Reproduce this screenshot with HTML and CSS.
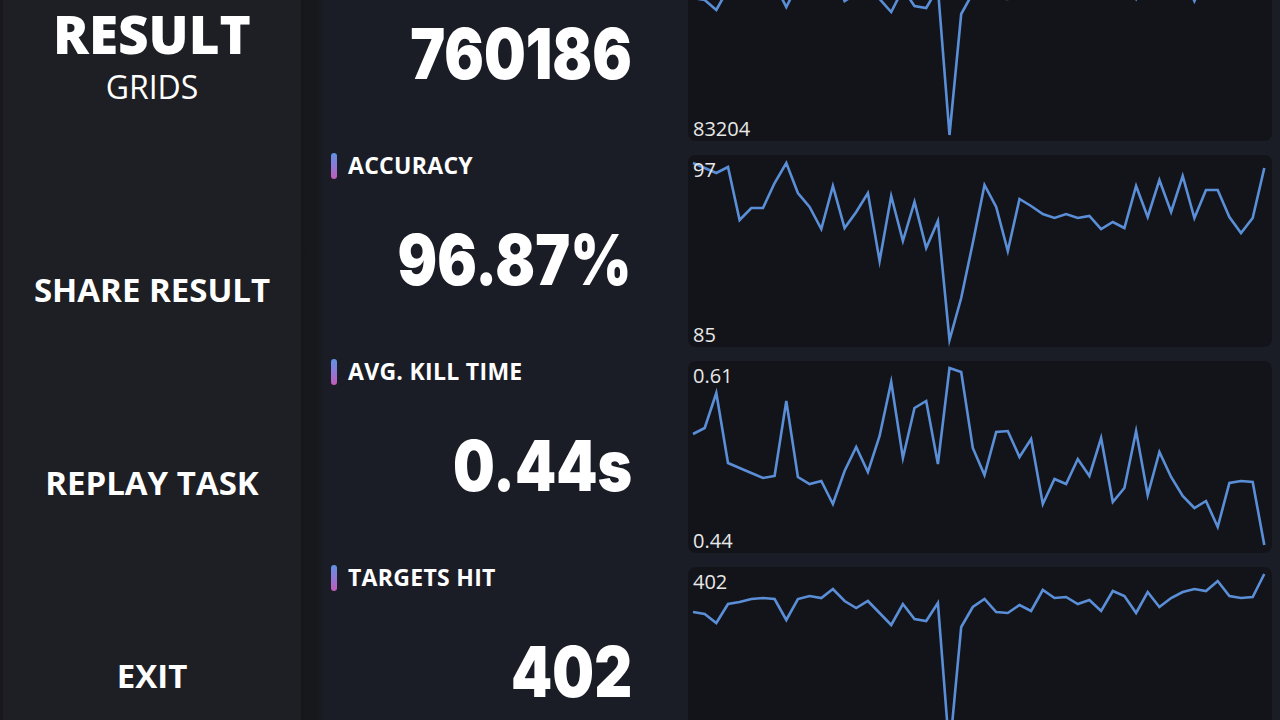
FILE: index.html
```html
<!DOCTYPE html>
<html lang="en">
<head>
<meta charset="utf-8">
<title>Result - Grids</title>
<link rel="stylesheet" href="styles.css">
</head>
<body>
<div class="app">
  <aside class="sidebar">
    <div class="sb-head">
      <div class="title">RESULT</div>
      <div class="subtitle">GRIDS</div>
    </div>
    <div class="sb-btn">SHARE RESULT</div>
    <div class="sb-btn">REPLAY TASK</div>
    <div class="sb-btn">EXIT</div>
  </aside>
  <div class="divider"></div>
  <main class="main">
    <div class="rows">
      <section class="row">
        <div class="stat">
          <div class="stat-label"><span class="bar"></span><span class="label-text">SCORE</span></div>
          <div class="stat-value"><span>760186</span></div>
        </div>
        <div class="chart">
          <svg class="line" viewBox="0 0 584 192" width="584" height="192">
            <polyline points="5,49 16.7,51 28.3,61 40,40 51.6,38 63.3,35 75,34 86.6,35 98.3,58 109.9,35 121.6,32 133.3,34 144.9,24 156.6,52 168.2,45 179.9,37 191.6,50 203.2,63 214.9,40 226.5,57 238.2,59 249.9,39 261.5,186 273.2,65 284.8,44 296.5,35 308.2,49 319.8,50 331.5,41 343.1,48 354.8,25 366.5,34 378.1,33 389.8,40 401.4,36 413.1,48 424.8,26 436.4,32 448.1,50 459.7,27 471.4,44 483.1,34 494.7,27 506.4,52 518,26 529.7,16 541.4,32 553,34 564.7,33 576.3,8"/>
          </svg>
          <span class="axis axis-bottom">83204</span>
        </div>
      </section>
      <section class="row">
        <div class="stat">
          <div class="stat-label"><span class="bar"></span><span class="label-text">ACCURACY</span></div>
          <div class="stat-value"><span>96.87%</span></div>
        </div>
        <div class="chart">
          <svg class="line" viewBox="0 0 584 192" width="584" height="192">
            <polyline points="5,8 16.7,13 28.3,18 40,12 51.6,65 63.3,53 75,53 86.6,28 98.3,8 109.9,38 121.6,52 133.3,74 144.9,31 156.6,73 168.2,57 179.9,38 191.6,106 203.2,41 214.9,86 226.5,47 238.2,93 249.9,66 261.5,185 273.2,143 284.8,88 296.5,30 308.2,52 319.8,96 331.5,44 343.1,51 354.8,59 366.5,63 378.1,59 389.8,63 401.4,61 413.1,74 424.8,67 436.4,73 448.1,31 459.7,62 471.4,25 483.1,57 494.7,21 506.4,63 518,35 529.7,35 541.4,62 553,78 564.7,63 576.3,13"/>
          </svg>
          <span class="axis axis-top">97</span>
          <span class="axis axis-bottom">85</span>
        </div>
      </section>
      <section class="row">
        <div class="stat">
          <div class="stat-label"><span class="bar"></span><span class="label-text">AVG. KILL TIME</span></div>
          <div class="stat-value"><span>0.44s</span></div>
        </div>
        <div class="chart">
          <svg class="line" viewBox="0 0 584 192" width="584" height="192">
            <polyline points="5,73 16.7,67 28.3,32 40,102 51.6,107 63.3,112 75,117 86.6,115 98.3,40 109.9,116 121.6,123 133.3,120 144.9,143 156.6,110 168.2,86 179.9,111 191.6,75 203.2,21 214.9,97 226.5,47 238.2,40 249.9,103 261.5,7 273.2,11 284.8,87 296.5,114 308.2,71 319.8,70 331.5,96 343.1,78 354.8,143 366.5,118 378.1,123 389.8,98 401.4,115 413.1,77 424.8,141 436.4,127 448.1,70 459.7,134 471.4,91 483.1,116 494.7,135 506.4,147 518,140 529.7,166 541.4,122 553,120 564.7,121 576.3,184"/>
          </svg>
          <span class="axis axis-top">0.61</span>
          <span class="axis axis-bottom">0.44</span>
        </div>
      </section>
      <section class="row">
        <div class="stat">
          <div class="stat-label"><span class="bar"></span><span class="label-text">TARGETS HIT</span></div>
          <div class="stat-value"><span>402</span></div>
        </div>
        <div class="chart">
          <svg class="line" viewBox="0 0 584 192" width="584" height="192">
            <polyline points="5,45 16.7,47 28.3,56 40,37 51.6,35 63.3,32 75,31 86.6,32 98.3,53 109.9,32 121.6,29 133.3,31 144.9,22 156.6,34 168.2,41 179.9,34 191.6,46 203.2,58 214.9,37 226.5,52 238.2,54 249.9,36 261.5,185 273.2,60 284.8,40 296.5,32 308.2,45 319.8,46 331.5,38 343.1,44 354.8,23 366.5,31 378.1,30 389.8,37 401.4,33 413.1,44 424.8,24 436.4,29 448.1,46 459.7,25 471.4,40 483.1,31 494.7,25 506.4,22 518,24 529.7,14 541.4,29 553,31 564.7,30 576.3,7"/>
          </svg>
          <span class="axis axis-top">402</span>
        </div>
      </section>
    </div>
  </main>
</div>
</body>
</html>
```

FILE: styles.css
```css
* { box-sizing: border-box; }

html, body {
  margin: 0;
  padding: 0;
  background: #1a1d26;
}

.app {
  display: flex;
  width: 1280px;
  height: 720px;
  overflow: hidden;
  background: #1a1d26;
  color: #ffffff;
}

.sidebar {
  width: 301px;
  flex: none;
  display: flex;
  flex-direction: column;
  background: #1e1f24;
  border-left: 3px solid #19191d;
}

.sb-head {
  height: 193px;
  flex: none;
  display: flex;
  flex-direction: column;
  align-items: center;
  padding-top: 2px;
}

.title {
  font: 800 53px/1.2 "Open Sans", "Noto Sans", sans-serif;
  color: #ffffff;
}

.subtitle {
  margin-top: 2px;
  font: 400 32px/1.2 "Open Sans", "Noto Sans", sans-serif;
  color: #ffffff;
}

.sb-btn {
  height: 193px;
  flex: none;
  display: flex;
  align-items: center;
  justify-content: center;
  font: 700 33px/1.2 "Open Sans", "Noto Sans", sans-serif;
  color: #ffffff;
}

.divider {
  width: 24px;
  flex: none;
  background: linear-gradient(to right, #16171b 0%, #17181c 65%, #1a1d26 100%);
}

.main {
  flex: 1;
  min-width: 0;
  padding-right: 8px;
}

.rows {
  margin-top: -51px;
  display: flex;
  flex-direction: column;
  gap: 14px;
}

.row {
  display: flex;
  height: 192px;
  flex: none;
}

.stat {
  width: 363px;
  flex: none;
  display: flex;
  flex-direction: column;
  padding: 0 56px 0 6px;
}

.stat-label {
  display: flex;
  align-items: center;
  gap: 11px;
  height: 26px;
  margin-top: -2px;
}

.bar {
  width: 6px;
  height: 26px;
  border-radius: 3px;
  background: linear-gradient(to bottom, #5f92e4 0%, #8f78d6 50%, #c05cb6 100%);
}

.label-text {
  font: 700 23px/1 "Open Sans", "Noto Sans", sans-serif;
  color: #ffffff;
  letter-spacing: 0.3px;
  position: relative;
  top: -1px;
}

.stat-value {
  margin-top: 46px;
  text-align: right;
  font: 900 70px/1 Inter, Roboto, sans-serif;
  color: #ffffff;
  white-space: nowrap;
}

.stat-value span {
  display: inline-block;
  transform: scaleX(0.84);
  transform-origin: right center;
}

.chart {
  width: 584px;
  flex: none;
  position: relative;
  overflow: hidden;
  background: #131419;
  border-radius: 8px;
}

.line {
  display: block;
}

.line polyline {
  fill: none;
  stroke: #5a8fd8;
  stroke-width: 2.6;
  stroke-linejoin: miter;
  stroke-miterlimit: 6;
}

.axis {
  position: absolute;
  left: 5px;
  font: 400 20px/1 "Open Sans", "Noto Sans", sans-serif;
  color: #e8e8e8;
}

.axis-top { top: 5px; }
.axis-bottom { bottom: 2px; }
```
